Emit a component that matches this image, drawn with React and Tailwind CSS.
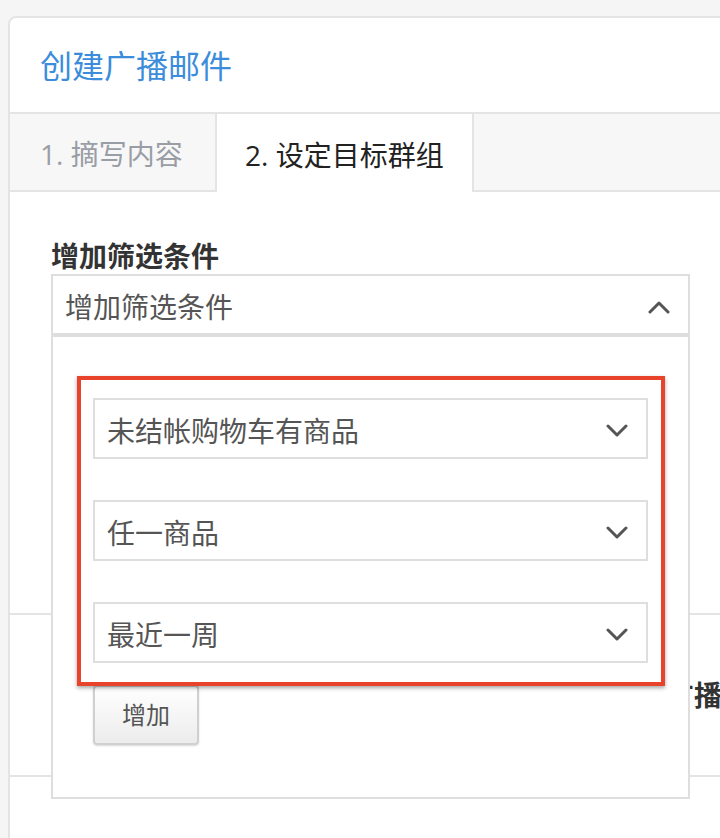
const Chevron = ({ up }) => (
  <svg width="22" height="14" viewBox="0 0 22 14" fill="none" stroke="#555" strokeWidth="3" strokeLinecap="round" strokeLinejoin="round">
    <path d={up ? "M2 12 L11 3 L20 12" : "M2 2 L11 11 L20 2"} />
  </svg>
);

const Select = ({ label, up }) => (
  <div className="flex items-center justify-between h-[61px] border-2 border-[#dedede] bg-white pl-[12px] pr-[18px] pt-[5px]">
    <span className="text-[28px] leading-[32px] text-[#555]">{label}</span>
    <Chevron up={up} />
  </div>
);

const App = () => {
  const filters = ["未结帐购物车有商品", "任一商品", "最近一周"];

  return (
    <div className="w-[720px] h-[838px] overflow-hidden bg-[#f5f5f5] pt-[16px] pl-[8px] font-['Open_Sans','Noto_Sans_CJK_SC',sans-serif]">
      <div className="w-[760px] h-[900px] bg-white border-2 border-[#e4e4e4] rounded-tl-[8px]">
        {/* Header */}
        <div className="h-[96px] flex items-center pl-[30px] pt-[2px] border-b-2 border-[#e4e4e4]">
          <h1 className="text-[32px] leading-[36px] text-[#3b8ddb]">创建广播邮件</h1>
        </div>

        {/* Tabs */}
        <div className="flex h-[78px]">
          <div className="w-[205px] flex items-center pl-[30px] pt-[3px] bg-[#f7f7f7] border-b-2 border-[#e4e4e4]">
            <span className="text-[28px] leading-[32px] text-[#999ea6]">1. 摘写内容</span>
          </div>
          <div className="w-[259px] flex items-center pl-[28px] pt-[3px] bg-white border-x-2 border-[#e4e4e4]">
            <span className="text-[28px] leading-[32px] text-[#222]">2. 设定目标群组</span>
          </div>
          <div className="flex-1 bg-[#f7f7f7] border-b-2 border-[#e4e4e4]" />
        </div>

        {/* Content */}
        <div className="pt-[48px]">
          <div className="pl-[41px]">
            <label className="block text-[28px] leading-[32px] font-bold text-[#333]">增加筛选条件</label>
            <div className="relative w-[639px] mt-[2px]">
              <Select label="增加筛选条件" up />

              {/* Dropdown panel */}
              <div className="absolute top-full left-0 right-0 z-20 bg-white border-2 border-[#dedede] pt-[61px] px-[40px] pb-[52px]">
                <div className="relative flex flex-col gap-[41px]">
                  {filters.map((f) => (
                    <Select key={f} label={f} />
                  ))}
                  <div className="absolute -top-[22px] -left-[16px] -right-[17px] -bottom-[23px] z-10 border-4 border-[#e8442b] shadow-[0_2px_4px_rgba(0,0,0,0.35)] pointer-events-none" />
                </div>
                <button className="mt-[22px] w-[106px] h-[60px] rounded-[4px] border-2 border-[#d0d0d0] bg-gradient-to-b from-white to-[#ececec] shadow-[0_1px_2px_rgba(0,0,0,0.15)] text-[24px] leading-[28px] text-[#555]">
                  增加
                </button>
              </div>
            </div>
          </div>

          {/* Underlying section */}
          <div className="mt-[278px] h-[164px] flex items-center border-y-2 border-[#e4e4e4] pl-[600px] overflow-hidden">
            <span className="whitespace-nowrap text-[28px] leading-[32px] font-bold text-[#333]">预览广播邮件</span>
          </div>
        </div>
      </div>
    </div>
  );
};

export default App;
